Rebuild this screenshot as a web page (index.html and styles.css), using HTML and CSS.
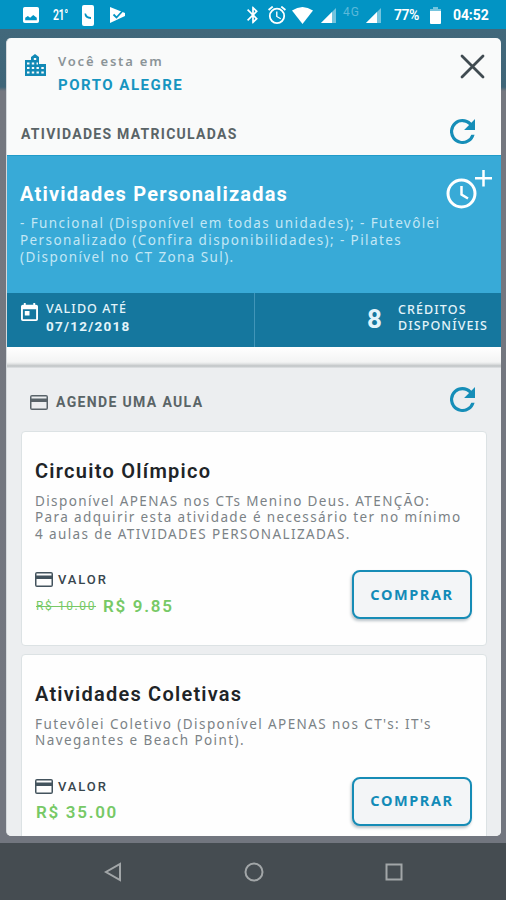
FILE: index.html
```html
<!DOCTYPE html>
<html lang="pt-BR">
<head>
<meta charset="utf-8">
<title>Atividades</title>
<link rel="stylesheet" href="styles.css">
</head>
<body>
<svg class="defs" aria-hidden="true">
  <symbol id="refresh" viewBox="4 4 16 16"><path d="M17.65 6.35A7.96 7.96 0 0 0 12 4a8 8 0 1 0 7.73 10h-2.08A6 6 0 1 1 12 6c1.66 0 3.14.69 4.22 1.78L13 11h7V4z"/></symbol>
  <symbol id="card" viewBox="0 0 18 15"><path fill-rule="evenodd" d="M2 0h14a2 2 0 0 1 2 2v11a2 2 0 0 1-2 2H2a2 2 0 0 1-2-2V2a2 2 0 0 1 2-2zM1.500 1.500v2h15v-2zM1.500 7v6.500h15V7z"/></symbol>
  <symbol id="signal" viewBox="0 0 15 15"><path d="M15 0v15H0z" opacity=".45"/><path d="M11 4v11H0z"/></symbol>
</svg>
<header class="status">
  <div class="status-left">
    <svg width="16" height="16" viewBox="3 3 18 18"><path d="M21 19V5a2 2 0 0 0-2-2H5a2 2 0 0 0-2 2v14a2 2 0 0 0 2 2h14a2 2 0 0 0 2-2zM5.500 18v-3l3-2 2.500 2 3.500-3 4 3v3z"/></svg>
    <span class="temp">21°</span>
    <svg class="phone" width="12" height="21" viewBox="0 0 12 21"><rect width="12" height="21" rx="2"/><path class="cut" d="M2.500 8.500q0 5 6.500 5.500v-2q-4 0-5-3.500z"/></svg>
    <svg class="play" width="17" height="17" viewBox="0 0 17 17"><path d="M1 0l15 6v3L1 16z"/><path class="tick" d="M4.500 7.500l3 3L14 3.500"/></svg>
  </div>
  <div class="status-right">
    <svg class="bt" width="12" height="18" viewBox="5 2 14 20"><path d="M17.710 7.710L12 2h-1v7.590L6.410 5 5 6.410 10.590 12 5 17.590 6.410 19 11 14.410V22h1l5.710-5.710L13.410 12zM13 5.830l1.880 1.880L13 9.590zm1.880 10.460L13 18.170v-3.760z"/></svg>
    <svg class="alarm" width="18" height="18" viewBox="2 2 20 20"><path d="M22 5.720l-4.600-3.860-1.290 1.530 4.600 3.860zM7.880 3.390L6.600 1.860 2 5.710l1.290 1.530zM12.500 8H11v6l4.750 2.850.75-1.230-4-2.370zM12 4a9 9 0 1 0 0 18 9 9 0 0 0 0-18zm0 16a7 7 0 1 1 0-14 7 7 0 0 1 0 14z"/></svg>
    <svg class="wifi" width="21" height="17" viewBox="0 0 21 17"><path d="M10.500 17L0 3.500Q10.500-3.500 21 3.500z"/></svg>
    <svg class="sig1" width="15" height="15"><use href="#signal"/></svg>
    <span class="net">4G</span>
    <svg class="sig2" width="15" height="15"><use href="#signal"/></svg>
    <span class="pct">77%</span>
    <svg class="bat" width="11" height="17" viewBox="0 0 11 17"><path d="M3 0h5v2h3v3H0V2h3z" opacity=".45"/><path d="M0 4h11v12a1 1 0 0 1-1 1H1a1 1 0 0 1-1-1z"/></svg>
    <span class="clock">04:52</span>
  </div>
</header>
<main class="backdrop">
  <section class="modal">
    <div class="place">
      <svg class="city" width="23" height="22" viewBox="0 0 23 22"><path fill-rule="evenodd" d="M1 6h6V3l4-3 4 3v7h7v12H1zM3 8.500v2h2.500v-2zM3 13v2h2.500v-2zM3 17.500v2h2.500v-2zM7.800 8.500v2h2.400v-2zM7.800 13v2h2.400v-2zM7.800 17.500v2h2.400v-2zM12.500 8.500v2h1.500v-2zM12.500 13v2h2.400v-2zM12.500 17.500v2h2.400v-2zM17.300 13v2h2.500v-2zM17.300 17.500v2h2.500v-2zM9.800 4v2h2.400V4z"/></svg>
      <div class="place-text"><div class="label">Você esta em</div><div class="name">PORTO ALEGRE</div></div>
      <svg class="close" width="25" height="25" viewBox="0 0 25 25"><path d="M2 2l21 21M23 2L2 23"/></svg>
    </div>
    <div class="enrolled-head"><h2 class="h-enrolled">ATIVIDADES MATRICULADAS</h2><svg class="refresh" width="25" height="25"><use href="#refresh"/></svg></div>
    <article class="plan">
      <div class="plan-body">
        <h1 class="plan-title">Atividades Personalizadas</h1>
        <p class="plan-text">- Funcional (Disponível em todas unidades); - Futevôlei<br>Personalizado (Confira disponibilidades); - Pilates<br>(Disponível no CT Zona Sul).</p>
      </div>
      <svg class="add-time" width="46" height="40" viewBox="0 0 46 40"><circle cx="15.500" cy="24.500" r="13.500"/><path class="thin" d="M15.500 17v8.500l6.500 4M37.500 1v16.500M29 9.200h17"/></svg>
    </article>
    <div class="facts">
      <div class="fact valid">
        <svg width="17" height="18" viewBox="3 1 18 20" preserveAspectRatio="none"><path d="M19 3h-1V1h-2v2H8V1H6v2H5a2 2 0 0 0-2 2v14a2 2 0 0 0 2 2h14a2 2 0 0 0 2-2V5a2 2 0 0 0-2-2zm0 16H5V8h14zM7 10h5v5H7z"/></svg>
        <div><div class="fact-label">VALIDO ATÉ</div><div class="date">07/12/2018</div></div>
      </div>
      <div class="fact credits"><span class="count">8</span><div class="fact-label cred-label">CRÉDITOS<br>DISPONÍVEIS</div></div>
    </div>
    <div class="fade"></div>
    <div class="schedule">
      <div class="schedule-head"><svg class="card-icon" width="18" height="15"><use href="#card"/></svg><h2 class="h-schedule">AGENDE UMA AULA</h2><svg class="refresh" width="25" height="25"><use href="#refresh"/></svg></div>
      <article class="class-card">
        <h3 class="t1">Circuito Olímpico</h3>
        <p class="desc">Disponível APENAS nos CTs Menino Deus. ATENÇÃO:<br>Para adquirir esta atividade é necessário ter no mínimo<br>4 aulas de ATIVIDADES PERSONALIZADAS.</p>
        <div class="buy">
          <div><div class="value"><svg width="18" height="15"><use href="#card"/></svg><span>VALOR</span></div><div class="price"><s>R$ 10.00</s><b>R$ 9.85</b></div></div>
          <button>COMPRAR</button>
        </div>
      </article>
      <article class="class-card">
        <h3 class="t2">Atividades Coletivas</h3>
        <p class="desc">Futevôlei Coletivo (Disponível APENAS nos CT's: IT's<br>Navegantes e Beach Point).</p>
        <div class="buy">
          <div><div class="value"><svg width="18" height="15"><use href="#card"/></svg><span>VALOR</span></div><div class="price"><b>R$ 35.00</b></div></div>
          <button>COMPRAR</button>
        </div>
      </article>
    </div>
  </section>
</main>
<nav class="nav">
  <svg width="18" height="20" viewBox="0 0 18 20"><path d="M16 2v16L2 10z"/></svg>
  <svg width="20" height="20" viewBox="0 0 20 20"><circle cx="10" cy="10" r="8.500"/></svg>
  <svg width="18" height="18" viewBox="0 0 18 18"><path d="M1.500 1.500h15v15h-15z"/></svg>
</nav>
</body>
</html>
```
FILE: styles.css
```css
* { box-sizing: border-box; }
body { margin: 0; width: 506px; height: 900px; overflow: hidden; display: flex; flex-direction: column; font-family: Roboto, sans-serif; white-space: nowrap; }
h1, h2, h3, p { margin: 0; }
svg { display: block; flex: none; }
.defs { display: none; }

.status { height: 29px; flex: none; background: #0294c4; color: #fff; display: flex; justify-content: space-between; }
.status svg { fill: #fff; }
.status-left, .status-right { display: flex; align-items: center; height: 30px; }
.status-left { padding-left: 23px; }
.temp { margin-left: 14px; width: 15px; font-size: 14px; font-weight: 600; letter-spacing: -.5px; transform: scaleX(.75); transform-origin: left; }
.phone { margin-left: 14px; }
.status .cut { fill: #0294c4; }
.play { margin-left: 15px; }
.status .tick { fill: none; stroke: #0294c4; stroke-width: 1.800; }
.status-right { padding-right: 17px; }
.alarm { margin-left: 9px; }
.wifi { margin-left: 6px; }
.sig1 { margin-left: 8px; }
.net { margin-left: 7px; width: 18px; font-size: 12px; letter-spacing: 1px; color: #5bb9da; padding-bottom: 7px; }
.sig2 { margin-left: 5px; }
.pct { margin-left: 13px; width: 27px; font-size: 14px; font-weight: 600; letter-spacing: -.5px; }
.bat { margin-left: 9px; }
.clock { margin-left: 12px; width: 36px; font-size: 14px; font-weight: 700; letter-spacing: -.1px; }

.backdrop { height: 814px; flex: none; padding: 9px 5px 7px 6px; background: linear-gradient(#42687b 0, #3f6578 58px, #74777f 62px, #72767f 100%); }
.modal { height: 798px; border-radius: 5px; background: #f9fafa; overflow: hidden; border-left: 1px solid #d5d9dc; display: flex; flex-direction: column; }
.modal > * { flex: none; }
.place { height: 72px; display: flex; padding: 12px 16px 0 17px; }
.city { fill: #1289b5; margin-top: 4px; }
.place-text { flex: 1; margin-left: 11px; }
.label { font: 600 13px/23px "Noto Sans", sans-serif; letter-spacing: 1.8px; color: #8b9498; }
.name { font-size: 15px; font-weight: 700; line-height: 24px; letter-spacing: 1.5px; color: #1695c0; }
.close { margin-top: 4px; fill: none; stroke: #404b51; stroke-width: 2.800; stroke-linecap: round; }
.enrolled-head { height: 45px; display: flex; justify-content: space-between; padding: 9px 26px 0 14px; }
h2 { font-size: 14px; line-height: 30px; font-weight: 700; color: #5a6467; }
.h-enrolled { letter-spacing: 1.28px; }
.refresh { fill: #168eb8; }

.plan { height: 138px; background: #38aad7; color: #fff; display: flex; justify-content: space-between; padding: 14px 9px 0 13px; border-top: 1px solid #219bc9; }
.plan-title { font-size: 20px; line-height: 26px; margin-top: 11px; font-weight: 700; letter-spacing: 1.2px; }
.plan-text { font: 13.500px/17px "Noto Sans", sans-serif; letter-spacing: 1.4px; margin-top: 8px; color: #c3e7f5; }
.add-time { fill: none; stroke: #fff; stroke-width: 3; margin-left: -40px; margin-top: -1px; }
.add-time .thin { stroke-width: 2.500; }

.facts { height: 54px; background: #15779e; display: grid; grid-template-columns: 248px 1fr; color: #e3f4fa; }
.fact { display: flex; }
.valid { border-right: 1px solid #4195b8; padding: 8px 0 0 14px; gap: 8px; }
.valid svg { fill: #fff; margin-top: 2px; }
.fact-label { font: 500 12.500px/16px "Noto Sans", sans-serif; letter-spacing: 1.1px; }
.date { font-size: 13.500px; line-height: 19px; font-weight: 700; letter-spacing: 1.25px; }
.credits { padding: 9px 0 0 112px; }
.count { font-size: 26px; font-weight: 700; line-height: 34px; width: 31px; }

.fade { height: 21px; background: linear-gradient(#fff 0, #f3f4f4 15px, #dfe1e2 17px, #bfc3c5 19px, #e2e4e6 21px); }
.schedule { height: 468px; background: #eceef0; overflow: hidden; padding: 0 14px; }
.schedule-head { height: 63px; display: flex; padding: 19px 12px 0 9px; }
.card-icon { fill: #596369; margin-top: 8px; }
.h-schedule { margin-left: 8px; flex: 1; letter-spacing: 1.35px; }
.class-card { height: 215px; margin-bottom: 8px; background: #fefefe; border: 1px solid #dce2e4; border-radius: 4px; padding: 25px 14px 0 13px; display: flex; flex-direction: column; }
h3 { font-size: 20px; line-height: 28px; font-weight: 600; color: #202427; }
.t1 { letter-spacing: 1.27px; }
.t2 { letter-spacing: 1.23px; }
.desc { font: 13.500px/16.800px "Noto Sans", sans-serif; letter-spacing: 1.38px; color: #7b8286; margin-top: 7.500px; }
.t2 + .desc { letter-spacing: 1.42px; }
.buy { display: flex; justify-content: space-between; margin-top: 26px; }
.value { display: flex; align-items: center; gap: 5px; height: 22px; font-size: 13px; font-weight: 500; letter-spacing: 1.9px; color: #38464e; }
.value svg { fill: #43535d; }
.price { display: flex; align-items: center; height: 30px; color: #77c966; padding-left: 1px; }
.price s { width: 67px; font-size: 12px; letter-spacing: 1.6px; }
.price b { font-size: 17px; font-weight: 600; letter-spacing: 1.7px; }
button { width: 120px; height: 49px; border: 2px solid #168cb6; border-radius: 8px; background: #f3f5f7; color: #128bb8; font: 700 14.500px/20px "Noto Sans", sans-serif; letter-spacing: 1.6px; box-shadow: -1px 2px 3px #b9c2c7; padding: 0 0 2px; margin-top: 1.500px; }

.nav { height: 57px; flex: none; background: #454c51; display: grid; grid-template-columns: 18px 20px 18px; column-gap: 121.500px; padding-left: 104px; align-items: center; }
.nav svg { fill: none; stroke: #a2a6a8; stroke-width: 2; }
```
